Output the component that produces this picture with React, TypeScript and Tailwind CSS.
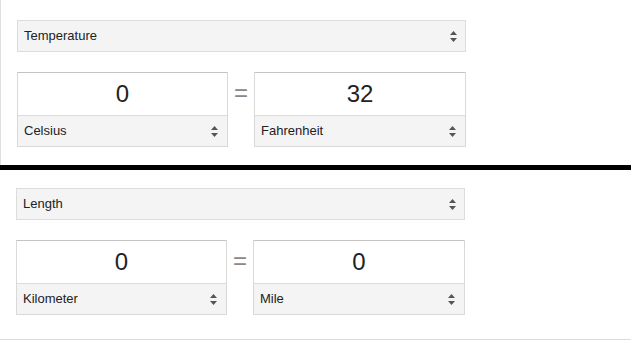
import React from 'react';

// Unit converter widgets: a category select, then two value boxes joined by "=".

const font = { fontFamily: '"Liberation Sans", Arial, sans-serif' };

function Arrows() {
  return (
    <svg width="7" height="11" viewBox="0 0 7 11" className="shrink-0">
      <path d="M3.5 0 L7 4 L0 4 Z" fill="#555" />
      <path d="M0 7 L7 7 L3.5 11 Z" fill="#555" />
    </svg>
  );
}

function CategorySelect({ label }: { label: string }) {
  return (
    <div className="flex h-[32px] w-[449px] items-center justify-between border border-[#dcdcdc] bg-[#f4f4f4] pl-[6px] pr-[8px] text-[13px] text-[#222]">
      <span>{label}</span>
      <Arrows />
    </div>
  );
}

function UnitBox({ value, unit, width }: { value: string; unit: string; width: string }) {
  return (
    <div className={`flex flex-col border border-[#d9d9d9] border-t-[#c4c4c4] ${width}`}>
      <div className="flex h-[42px] items-center justify-center bg-white text-[24px] text-[#222]">
        {value}
      </div>
      <div className="flex h-[31px] items-center justify-between border-t border-[#dcdcdc] bg-[#f4f4f4] pl-[6px] pr-[9px] text-[13px] text-[#222]">
        <span>{unit}</span>
        <Arrows />
      </div>
    </div>
  );
}

function Converter({
  category, from, to, fromUnit, toUnit,
}: {
  category: string;
  from: string;
  to: string;
  fromUnit: string;
  toUnit: string;
}) {
  return (
    <div className="flex flex-col gap-[20px]">
      <CategorySelect label={category} />
      <div className="flex">
        <UnitBox value={from} unit={fromUnit} width="w-[211px]" />
        <div className="flex h-[43px] w-[26px] items-center justify-center pb-[1px] text-[24px] leading-none text-[#888]">
          =
        </div>
        <UnitBox value={to} unit={toUnit} width="w-[212px]" />
      </div>
    </div>
  );
}

export default function App() {
  return (
    <div className="h-[340px] w-[631px] overflow-hidden bg-white" style={font}>
      <div className="h-[165px] border-l border-[#e0e0e0] pl-[16px] pt-[20px]">
        <Converter category="Temperature" from="0" to="32" fromUnit="Celsius" toUnit="Fahrenheit" />
      </div>
      <div className="h-[5px] bg-black" />
      <div className="h-[170px] border-b border-[#dcdcdc] pl-[16px] pt-[18px]">
        <Converter category="Length" from="0" to="0" fromUnit="Kilometer" toUnit="Mile" />
      </div>
    </div>
  );
}
